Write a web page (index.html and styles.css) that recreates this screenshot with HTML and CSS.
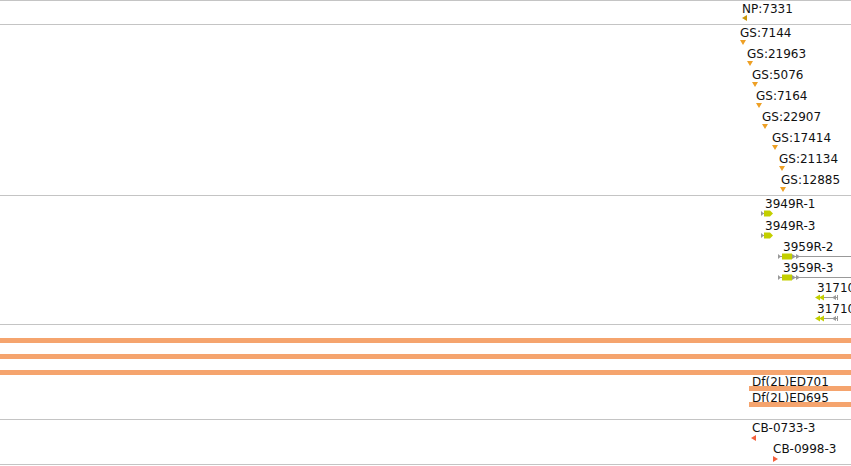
FILE: index.html
```html
<!DOCTYPE html>
<html lang="en">
<head>
    <meta charset="UTF-8">
    <meta name="viewport" content="width=device-width, initial-scale=1.0">
    <title>Tracks</title>
    <link rel="stylesheet" href="styles.css">
</head>
<body>
    <div class="browser">
        <div class="track track-np" id="trackNp"></div>
        <div class="track track-gs" id="trackGs"></div>
        <div class="track track-rna" id="trackRna"></div>
        <div class="track track-df" id="trackDf">
            <div class="df-bar"></div>
            <div class="df-bar"></div>
            <div class="df-bar"></div>
        </div>
        <div class="track track-cb" id="trackCb"></div>
    </div>

    <script>
        // Glifos de cada tipo de feature
        const glyphs = {
            npLeft: '<svg width="6" height="7"><polygon points="5,0 5,6 0,3" fill="#c8960c"/></svg>',
            gsDown: '<svg width="7" height="5"><polygon points="0,0 6,0 3,5" fill="#eea025"/></svg>',
            cbLeft: '<svg width="6" height="7"><polygon points="5,0 5,6 0,3" fill="#f4603c"/></svg>',
            cbRight: '<svg width="6" height="7"><polygon points="0,0 0,6 5,3" fill="#f4603c"/></svg>',
            rnaShort: '<svg width="14" height="7">' +
                '<polygon points="0,1 3,3.5 0,6" fill="#999"/><rect x="0" y="3" width="3" height="1" fill="#999"/>' +
                '<polygon points="3,0.5 9,0.5 12,3.5 9,6.5 3,6.5" fill="#c3cf00"/></svg>',
            rnaLong: '<svg width="80" height="7">' +
                '<polygon points="0,1 3,3.5 0,6" fill="#999"/><rect x="0" y="3" width="4" height="1" fill="#999"/>' +
                '<rect x="4" y="0.5" width="10" height="6" fill="#c3cf00"/>' +
                '<polygon points="14,1 18,3.5 14,6" fill="#999"/><polygon points="18,1 22,3.5 18,6" fill="#999"/>' +
                '<rect x="14" y="3" width="66" height="1" fill="#999"/></svg>',
            rnaRev: '<svg width="25" height="7">' +
                '<polygon points="0,3.5 5,0.5 5,6.5" fill="#c3cf00"/><polygon points="4,3.5 9,0.5 9,6.5" fill="#c3cf00"/>' +
                '<rect x="9" y="3" width="13" height="1" fill="#999"/>' +
                '<polygon points="17,3.5 21,1 21,6" fill="#999"/><rect x="22" y="1" width="1" height="5" fill="#999"/></svg>',
            dfBar: '<div class="df-feature-bar"></div>'
        };

        // Datos: x del glifo, x del texto, y relativa a la pista
        const features = [
            { track: 'trackNp', gx: 742, lx: 742, y: 1, label: 'NP:7331', glyph: 'npLeft' },

            { track: 'trackGs', gx: 740, lx: 740, y: 1, label: 'GS:7144', glyph: 'gsDown' },
            { track: 'trackGs', gx: 747, lx: 747, y: 22, label: 'GS:21963', glyph: 'gsDown' },
            { track: 'trackGs', gx: 752, lx: 752, y: 43, label: 'GS:5076', glyph: 'gsDown' },
            { track: 'trackGs', gx: 756, lx: 756, y: 64, label: 'GS:7164', glyph: 'gsDown' },
            { track: 'trackGs', gx: 762, lx: 762, y: 85, label: 'GS:22907', glyph: 'gsDown' },
            { track: 'trackGs', gx: 772, lx: 772, y: 106, label: 'GS:17414', glyph: 'gsDown' },
            { track: 'trackGs', gx: 779, lx: 779, y: 127, label: 'GS:21134', glyph: 'gsDown' },
            { track: 'trackGs', gx: 780, lx: 781, y: 148, label: 'GS:12885', glyph: 'gsDown' },

            { track: 'trackRna', gx: 761, lx: 765, y: 1, label: '3949R-1', glyph: 'rnaShort' },
            { track: 'trackRna', gx: 761, lx: 765, y: 23, label: '3949R-3', glyph: 'rnaShort' },
            { track: 'trackRna', gx: 778, lx: 783, y: 44, label: '3959R-2', glyph: 'rnaLong' },
            { track: 'trackRna', gx: 778, lx: 783, y: 65, label: '3959R-3', glyph: 'rnaLong' },
            { track: 'trackRna', gx: 815, lx: 817, y: 85, label: '31710', glyph: 'rnaRev' },
            { track: 'trackRna', gx: 815, lx: 817, y: 106, label: '31710', glyph: 'rnaRev' },

            { track: 'trackDf', gx: 749, lx: 752, y: 50, label: 'Df(2L)ED701', glyph: 'dfBar' },
            { track: 'trackDf', gx: 749, lx: 752, y: 66, label: 'Df(2L)ED695', glyph: 'dfBar' },

            { track: 'trackCb', gx: 751, lx: 752, y: 1, label: 'CB-0733-3', glyph: 'cbLeft' },
            { track: 'trackCb', gx: 773, lx: 773, y: 22, label: 'CB-0998-3', glyph: 'cbRight' }
        ];

        function drawFeatures() {
            features.forEach(feature => {
                const el = document.createElement('div');
                el.classList.add('feature', 'feature-' + feature.glyph);
                el.style.left = feature.gx + 'px';
                el.style.top = feature.y + 'px';
                el.innerHTML = `
                    <div class="feature-label" style="margin-left: ${feature.lx - feature.gx}px">${feature.label}</div>
                    <div class="feature-glyph">${glyphs[feature.glyph]}</div>
                `;
                document.getElementById(feature.track).appendChild(el);
            });
        }

        drawFeatures();
    </script>
</body>
</html>
```

FILE: styles.css
```css
body {
    margin: 0;
    background-color: #fff;
    font-family: "DejaVu Sans", Verdana, sans-serif;
    font-size: 12px;
    color: #111;
    overflow: hidden;
}
.browser {
    width: 851px;
    height: 466px;
    overflow: hidden;
}
.track {
    position: relative;
    border-top: 1px solid #c4c4c4;
    overflow: hidden;
}
.track-np {
    height: 23px;
}
.track-gs {
    height: 170px;
}
.track-rna {
    height: 128px;
}
.track-df {
    height: 95px;
    display: flex;
    flex-direction: column;
    gap: 11px;
    padding-top: 13px;
    box-sizing: border-box;
}
.track-cb {
    height: 44px;
    border-bottom: 1px solid #c4c4c4;
}
.df-bar {
    height: 5px;
    background-color: #f5a46e;
}
.feature {
    position: absolute;
    display: flex;
    flex-direction: column;
    white-space: nowrap;
}
.feature-label {
    line-height: 14px;
}
.feature-glyph {
    line-height: 0;
}
.feature-glyph svg {
    display: block;
}
.feature-npLeft .feature-glyph {
    margin-top: -1px;
}
.feature-rnaShort .feature-glyph,
.feature-rnaLong .feature-glyph,
.feature-rnaRev .feature-glyph {
    margin-top: -1px;
}
.feature-dfBar .feature-glyph {
    margin-top: -3px;
}
.df-feature-bar {
    width: 110px;
    height: 5px;
    background-color: #f5a46e;
}
```
